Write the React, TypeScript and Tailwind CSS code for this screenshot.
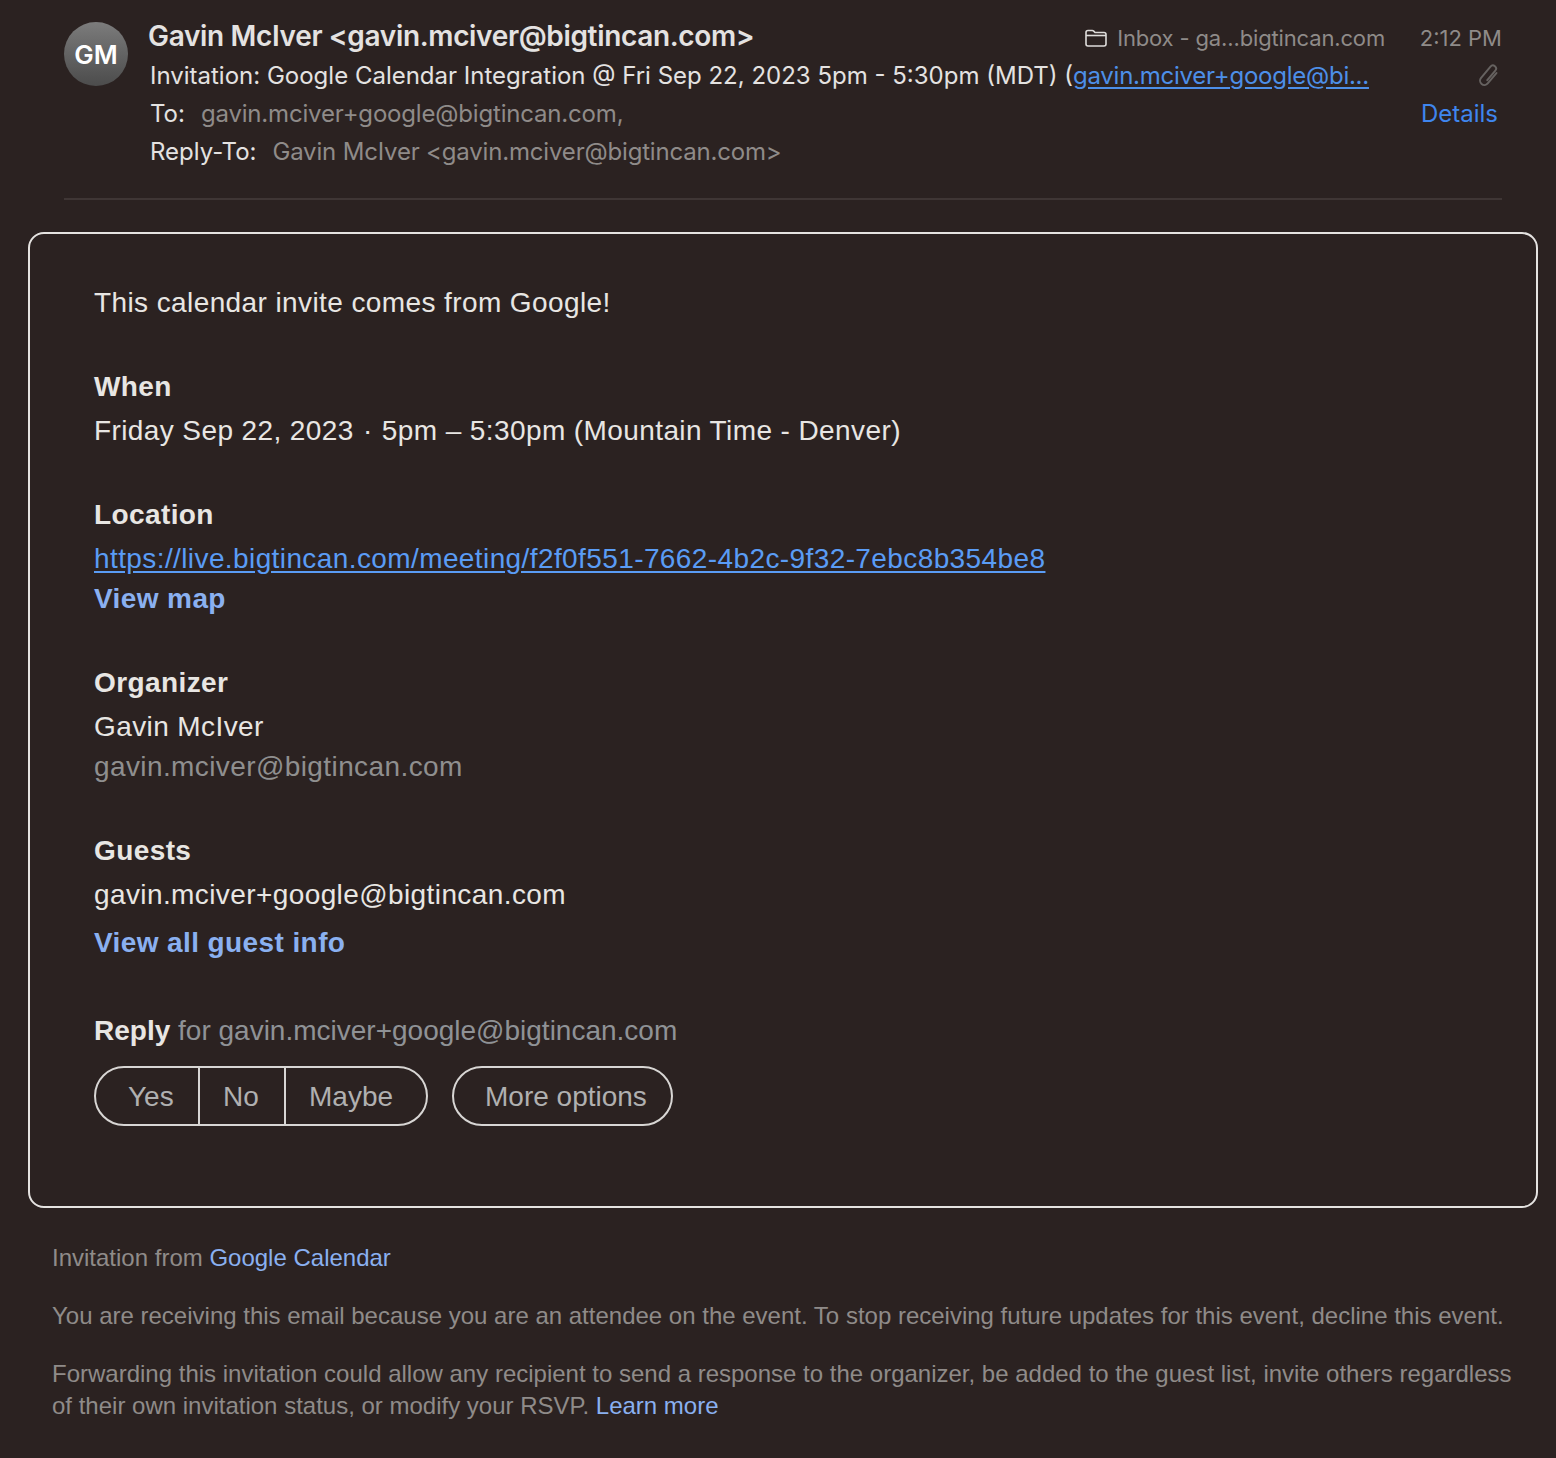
import React from "react";

const sans = "font-['Liberation_Sans',Arial,sans-serif]";

function Section({ title, children, className = "" }: { title: string; children: React.ReactNode; className?: string }) {
  return (
    <div className={className}>
      <div className="h-[40px] leading-[40px] text-[28px] font-bold text-[#e8e6e3] tracking-[0.4px]">{title}</div>
      {children}
    </div>
  );
}

export default function App() {
  return (
    <div className="w-[1556px] h-[1458px] bg-[#2b2221] overflow-hidden font-['Inter',sans-serif]">
      <header className="pl-[64px] pr-[54px] pt-[16px]">
        <div className="flex gap-[20px]">
          <div className="mt-[6px] w-[64px] h-[64px] shrink-0 rounded-full bg-gradient-to-b from-[#7c7c7c] to-[#4c4c4c] flex items-center justify-center text-white text-[26px] font-semibold">GM</div>
          <div className="flex-1 min-w-0">
            <div className="flex h-[40px] mb-[1px] items-center">
              <div className="text-[28px] font-semibold tracking-[-0.34px] text-[#e4e2e1] flex-1">Gavin McIver &lt;gavin.mciver@bigtincan.com&gt;</div>
              <svg width="22" height="18" viewBox="0 0 22 18" fill="none" stroke="#dedcda" strokeWidth="1.6" className="mr-[10px] mt-[4px]">
                <path d="M1 15V3.5C1 2.1 1.8 1.5 3 1.5H7.2C8 1.5 8.4 1.8 9 2.4L10 3.5H19C20.2 3.5 21 4.2 21 5.5V15C21 16.2 20.2 17 19 17H3C1.8 17 1 16.2 1 15Z" />
                <path d="M1 6.5H21" />
              </svg>
              <span className="text-[22px] tracking-[-0.15px] text-[#8f8b89] mt-[4px]">Inbox - ga...bigtincan.com</span>
              <span className="w-[117px] text-right text-[22px] text-[#8f8b89] mt-[4px]">2:12 PM</span>
            </div>
            <div className="flex h-[38px] items-center">
              <div className="flex-1 text-[24px] text-[#e4e2e1] whitespace-nowrap ml-[2px]">
                Invitation: Google Calendar Integration @ Fri Sep 22, 2023 5pm - 5:30pm (MDT) (<span className="text-[#4d8fe8] underline underline-offset-[3px] tracking-[-0.25px]">gavin.mciver+google@bi...</span>
              </div>
              <svg width="26" height="26" viewBox="0 0 24 24" fill="none" stroke="#666260" strokeWidth="1.8" strokeLinecap="round" strokeLinejoin="round">
                <path d="M15.5 5.5V18a4 4 0 0 1-8 0V4.500a2.900 2.900 0 0 1 5.800 0V16" transform="rotate(40 12 12)" />
              </svg>
            </div>
            <div className="flex h-[38px] items-center text-[24px]">
              <span className="text-[#e4e2e1] ml-[2px]">To:</span>
              <span className="text-[#8f8b89] ml-[16px] flex-1 tracking-[-0.18px]">gavin.mciver+google@bigtincan.com,</span>
              <span className="text-[#3f86ee] mr-[4px]">Details</span>
            </div>
            <div className="flex h-[38px] items-center text-[24px]">
              <span className="text-[#e4e2e1] ml-[2px]">Reply-To:</span>
              <span className="text-[#8f8b89] ml-[16px] tracking-[-0.18px]">Gavin McIver &lt;gavin.mciver@bigtincan.com&gt;</span>
            </div>
          </div>
        </div>
        <div className="mt-[27px] h-[2px] bg-[#3f3635]" />
      </header>

      <main className={`${sans} ml-[28px] mr-[18px] mt-[32px] h-[976px] rounded-[16px] border-2 border-[#e5e3e1] pl-[64px] pt-[49px]`}>
        <div className="h-[40px] leading-[40px] text-[28px] text-[#e8e6e3] tracking-[0.4px]">This calendar invite comes from Google!</div>

        <Section title="When" className="mt-[44px]">
          <div className="h-[48px] leading-[48px] text-[28px] text-[#e8e6e3] tracking-[0.4px]">Friday Sep 22, 2023 <span className="mx-[1px]">·</span> 5pm – 5:30pm (Mountain Time - Denver)</div>
        </Section>

        <Section title="Location" className="mt-[40px]">
          <div className="h-[48px] leading-[48px] text-[28px] text-[#5a9cf5] underline underline-offset-[3px] tracking-[0.4px]">https://live.bigtincan.com/meeting/f2f0f551-7662-4b2c-9f32-7ebc8b354be8</div>
          <div className="h-[32px] leading-[32px] text-[28px] font-bold text-[#8ab0f0] tracking-[0.4px]">View map</div>
        </Section>

        <Section title="Organizer" className="mt-[48px]">
          <div className="h-[48px] leading-[48px] text-[28px] text-[#e8e6e3] tracking-[0.4px]">Gavin McIver</div>
          <div className="h-[32px] leading-[32px] text-[28px] text-[#8f8f8f] tracking-[0.4px]">gavin.mciver@bigtincan.com</div>
        </Section>

        <Section title="Guests" className="mt-[48px]">
          <div className="h-[48px] leading-[48px] text-[28px] text-[#e8e6e3] tracking-[0.4px]">gavin.mciver+google@bigtincan.com</div>
          <div className="h-[48px] leading-[48px] text-[28px] font-bold text-[#8ab0f0] tracking-[0.4px]">View all guest info</div>
        </Section>

        <div className="mt-[44px] h-[40px] leading-[40px] text-[28px] text-[#8f9296]">
          <span className="font-bold text-[#e8e6e3]">Reply</span> for gavin.mciver+google@bigtincan.com
        </div>

        <div className="mt-[15px] flex gap-[24px] text-[28px] text-[#b0b0b0]">
          <div className="flex h-[60px] rounded-full border-2 border-[#d8d6d4]">
            <div className="w-[102px] pl-[32px] leading-[58px]">Yes</div>
            <div className="w-[86px] border-l-2 border-[#d8d6d4] pl-[23px] leading-[58px]">No</div>
            <div className="w-[142px] border-l-2 border-[#d8d6d4] pl-[23px] leading-[58px]">Maybe</div>
          </div>
          <div className="h-[60px] w-[221px] rounded-full border-2 border-[#d8d6d4] pl-[31px] leading-[58px]">More options</div>
        </div>
      </main>

      <footer className={`${sans} pl-[52px] pt-[34px] text-[24px] text-[#8f8b89]`}>
        <div className="h-[32px] leading-[32px]">Invitation from <span className="text-[#8ab0f0]">Google Calendar</span></div>
        <div className="mt-[26px] h-[32px] leading-[32px] whitespace-nowrap">You are receiving this email because you are an attendee on the event. To stop receiving future updates for this event, decline this event.</div>
        <div className="mt-[26px] leading-[32px] whitespace-nowrap">
          <div>Forwarding this invitation could allow any recipient to send a response to the organizer, be added to the guest list, invite others regardless</div>
          <div>of their own invitation status, or modify your RSVP. <span className="text-[#8ab0f0]">Learn more</span></div>
        </div>
      </footer>
    </div>
  );
}
